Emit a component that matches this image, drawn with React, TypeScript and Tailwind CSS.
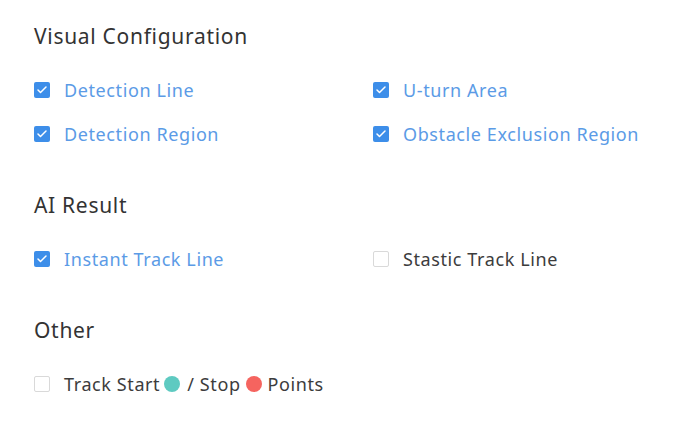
import { Check } from 'lucide-react';

type Item = { label: React.ReactNode; checked: boolean };

function Box({ checked }: { checked: boolean }) {
  if (checked) {
    return (
      <span className="w-4 h-4 rounded-[2px] bg-[#3d8ee9] flex items-center justify-center flex-shrink-0">
        <Check className="w-3 h-3 text-white" strokeWidth={3} />
      </span>
    );
  }
  return <span className="w-4 h-4 rounded-[2px] border border-[#d9d9d9] bg-white flex-shrink-0" />;
}

function Row({ item }: { item: Item }) {
  return (
    <div className="flex items-center h-6">
      <Box checked={item.checked} />
      <span
        className={`ml-[14px] text-[18px] leading-6 tracking-[0.6px] ${item.checked ? 'text-[#5b9be6]' : 'text-[#3c3c3c]'}`}
      >
        {item.label}
      </span>
    </div>
  );
}

function Section({ title, items, className }: { title: string; items: Item[]; className?: string }) {
  return (
    <div className={className}>
      <h2 className="text-[21px] leading-7 tracking-[0.7px] text-[#333333]">{title}</h2>
      <div className="grid grid-cols-[339px_1fr] gap-y-5 mt-7">
        {items.map((item, idx) => (
          <Row key={idx} item={item} />
        ))}
      </div>
    </div>
  );
}

export default function App() {
  const visual: Item[] = [
    { label: 'Detection Line', checked: true },
    { label: 'U-turn Area', checked: true },
    { label: 'Detection Region', checked: true },
    { label: 'Obstacle Exclusion Region', checked: true },
  ];
  const ai: Item[] = [
    { label: 'Instant Track Line', checked: true },
    { label: 'Stastic Track Line', checked: false },
  ];
  const other: Item[] = [
    {
      label: (
        <span className="flex items-center">
          Track Start
          <span className="inline-block w-4 h-4 rounded-full bg-[#5ecac1] ml-1 mr-[7px]" />
          / Stop
          <span className="inline-block w-4 h-4 rounded-full bg-[#f5645f] ml-[5px] mr-[6px]" />
          Points
        </span>
      ),
      checked: false,
    },
  ];

  return (
    <div className="min-h-screen bg-white pl-[34px] pt-[22px]" style={{ fontFamily: '"Noto Sans", "Open Sans", sans-serif' }}>
      <Section title="Visual Configuration" items={visual} />
      <Section title="AI Result" items={ai} className="mt-[45px]" />
      <Section title="Other" items={other} className="mt-[45px]" />
    </div>
  );
}
